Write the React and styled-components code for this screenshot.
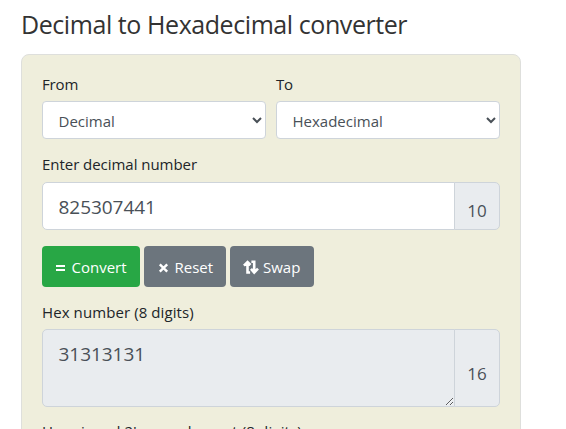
import React from "react";
import styled, { createGlobalStyle } from "styled-components";

const GlobalStyle = createGlobalStyle`
  *, *::before, *::after { box-sizing: border-box; }
  html, body { margin: 0; height: 429px; overflow: hidden; background: #fff; }
  body { font-family: "Open Sans", "Noto Sans", sans-serif; font-size: 15px; line-height: 24px; color: #212529; }
`;

const Page = styled.main`
  width: 521px;
  height: 429px;
  overflow: hidden;
  padding: 8px 0 0 21px;
`;

const Title = styled.h1`
  margin: 0 0 14px;
  height: 32px;
  font-size: 25px;
  font-weight: 400;
  line-height: 32px;
  letter-spacing: -0.43px;
  white-space: nowrap;
  color: #333;
`;

const Panel = styled.form`
  display: flex;
  flex-direction: column;
  height: 460px;
  padding: 17px 20px;
  border: 1px solid #dedfdc;
  border-radius: 8px;
  background: #efeedc;
`;

const Columns = styled.div`
  display: grid;
  grid-template-columns: 224px 224px;
  gap: 10px;
  margin-bottom: 13px;
`;

const Label = styled.label`
  display: block;
  height: 24px;
  margin-bottom: ${(p) => p.$gap ?? 5}px;
  white-space: nowrap;
  letter-spacing: ${(p) => p.$tracking ?? -0.15}px;
`;

const Select = styled.select`
  display: block;
  width: 100%;
  height: 38px;
  padding: 7px 12px 5px 11.5px;
  border: 1px solid #ced4da;
  border-radius: 4px;
  background: #fff;
  color: #495057;
  font: inherit;
  letter-spacing: 0;
`;

const InputGroup = styled.div`
  display: flex;
  height: ${(p) => p.$height}px;
  margin-bottom: ${(p) => p.$after}px;
`;

const fieldStyles = `
  flex: 1;
  min-width: 0;
  height: 100%;
  margin: 0;
  padding: 9px 16px 7px 15.5px;
  border: 1px solid #ced4da;
  border-radius: 5px 0 0 5px;
  outline: 0;
  color: #495057;
  font-family: inherit;
  font-size: 19px;
  line-height: 30px;
  letter-spacing: -0.05px;
`;

const Input = styled.input`
  ${fieldStyles}
  background: #fff;
`;

const Result = styled.textarea`
  ${fieldStyles}
  background: #e9ecef;
  resize: vertical;
`;

const Base = styled.span`
  display: flex;
  align-items: center;
  justify-content: center;
  width: 46px;
  margin-left: -1px;
  padding-top: ${(p) => p.$drop}px;
  border: 1px solid #ced4da;
  border-radius: 0 5px 5px 0;
  background: #e9ecef;
  color: #495057;
  font-size: 17px;
`;

const Actions = styled.div`
  display: flex;
  gap: 4px;
  margin-bottom: 13px;
`;

const Button = styled.button`
  display: flex;
  align-items: center;
  width: ${(p) => p.$width}px;
  height: 41px;
  padding: 1px 0 0 13px;
  gap: ${(p) => p.$gap ?? 5}px;
  border: 0;
  border-radius: 4px;
  background: ${(p) => (p.$primary ? "#28a745" : "#6c757d")};
  color: #fff;
  font: inherit;
  letter-spacing: 0;
  white-space: nowrap;

  svg { flex: none; margin-top: 2px; }
`;

const EqualsIcon = () => (
  <svg width="11" height="14" viewBox="0 0 11 14" fill="#fff">
    <path d="M1 4h9v2H1zM1 8h9v2H1z" />
  </svg>
);

const CrossIcon = () => (
  <svg width="13" height="14" viewBox="0 0 13 14" stroke="#fff" strokeWidth="2.4">
    <path d="M2.8 3.3l7.4 7.4M10.2 3.3l-7.4 7.4" />
  </svg>
);

const SwapIcon = () => (
  <svg width="16" height="16" viewBox="0 0 16 16" fill="none" stroke="#fff" strokeWidth="2.6">
    <path d="M0.9 5.6L4.5 2l3 3M4.5 2.5v10h2.6M8.4 1.8h2.8v10.7M8 8.9l3.2 3.6 3.8-3.8" />
  </svg>
);

export default function App() {
  return (
    <>
      <GlobalStyle />
      <Page>
        <Title>Decimal to Hexadecimal converter</Title>
        <Panel>
          <Columns>
            <div>
              <Label htmlFor="from">From</Label>
              <Select id="from"><option>Decimal</option></Select>
            </div>
            <div>
              <Label htmlFor="to">To</Label>
              <Select id="to"><option>Hexadecimal</option></Select>
            </div>
          </Columns>
          <Label htmlFor="number" $gap={6} $tracking={-0.04}>Enter decimal number</Label>
          <InputGroup $height={48} $after={16}>
            <Input id="number" defaultValue="825307441" />
            <Base $drop={10}>10</Base>
          </InputGroup>
          <Actions>
            <Button type="button" $width={98} $gap={5.5} $primary><EqualsIcon />Convert</Button>
            <Button type="button" $width={82} $gap={4.5}><CrossIcon />Reset</Button>
            <Button type="button" $width={84} $gap={4}><SwapIcon />Swap</Button>
          </Actions>
          <Label htmlFor="hex" $tracking={0.09}>Hex number (8 digits)</Label>
          <InputGroup $height={78} $after={12}>
            <Result id="hex" readOnly defaultValue="31313131" />
            <Base $drop={12}>16</Base>
          </InputGroup>
          <Label $tracking={0.14}>Hex signed 2's complement (8 digits)</Label>
        </Panel>
      </Page>
    </>
  );
}
